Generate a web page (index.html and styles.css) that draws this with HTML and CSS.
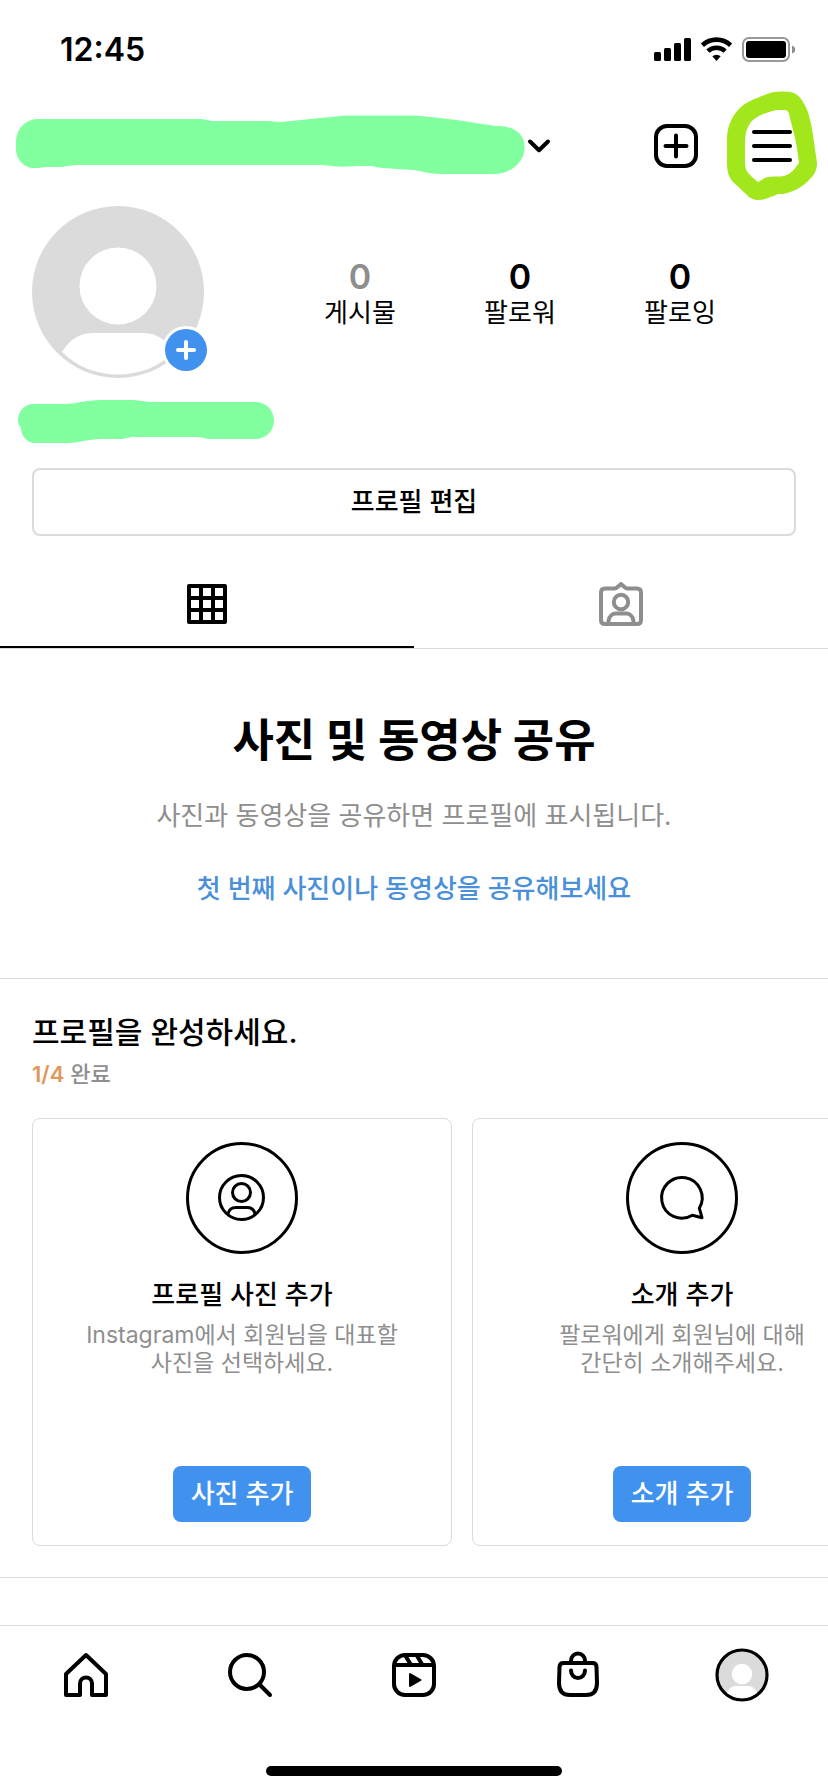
FILE: index.html
```html
<!DOCTYPE html>
<html lang="ko">
<head>
<meta charset="utf-8">
<meta name="viewport" content="width=device-width, initial-scale=1">
<title>프로필</title>
<link rel="stylesheet" href="styles.css">
</head>
<body>
<div class="status">
  <time class="clock">12:45</time>
  <svg class="status-icons" width="142" height="26" viewBox="0 0 142 26" aria-hidden="true">
    <rect x="0" y="15" width="7" height="9" rx="1.5"/>
    <rect x="10" y="11" width="7" height="13" rx="1.5"/>
    <rect x="20" y="6" width="7" height="18" rx="1.5"/>
    <rect x="30" y="1" width="7" height="23" rx="1.5"/>
    <g fill="none" stroke="#000" stroke-width="4.6">
      <path d="M48.4 8.2a20.6 20.6 0 0 1 28.2 0"/>
      <path d="M53.9 14.2a12.4 12.4 0 0 1 17.200 0"/>
    </g>
    <path d="M58.300 19.300a6.200 6.200 0 0 1 8.400 0L62.500 24z"/>
    <rect x="89" y="1" width="46" height="23" rx="6" fill="none" stroke="#999" stroke-width="2"/>
    <rect x="92" y="4" width="40" height="17" rx="3"/>
    <path d="M138 8.500q3.200 1 3.200 4t-3.200 4z" fill="#8e8e8e"/>
  </svg>
</div>

<header class="topbar">
  <button class="account" aria-label="계정 전환">
    <svg class="handle" width="510" height="61" viewBox="16 114 510 61" aria-hidden="true"><path class="brush" d="M16 143C16 129 25 119 39 119H198C206 119 208 121 216 121H266C272 121 276 122 281 122L320 118C333 117 340 115.500 352 115.500H414C438 117 470 122 496 126C510 126 519 130 523 139C530 158 513 174 494 174H441C430 174 421 171 414 170C400 169 393 169 383 168C375 167 374 166 366 166C356 166 347 167 337 166.500C330 166 325 165 317 165H78C70 165 67 167 57 167H46C40 168 37 168 32 168C23 167 16 158 16 150Z"/></svg>
    <svg class="chevron" width="24" height="16" viewBox="0 0 24 16" aria-hidden="true"><path d="M3 3.500L12 12.200L21 3.500" fill="none" stroke="#000" stroke-width="4" stroke-linecap="round" stroke-linejoin="round"/></svg>
  </button>
  <div class="actions">
    <button class="icon-btn" aria-label="만들기">
      <svg width="44" height="44" viewBox="0 0 44 44" fill="none" stroke="#000" stroke-width="4" stroke-linecap="round"><rect x="2" y="2" width="40" height="40" rx="11"/><path d="M22 11.500v21M11.500 22h21"/></svg>
    </button>
    <button class="icon-btn menu" aria-label="메뉴">
      <svg width="44" height="44" viewBox="0 0 44 44" fill="none" stroke="#000" stroke-width="4" stroke-linecap="round"><path d="M4 8h36M4 22h36M4 36h36"/></svg>
      <svg class="ring" width="92" height="110" viewBox="726 91 92 110" aria-hidden="true"><path fill="#a2e71c" fill-rule="evenodd" d="M767 94C773 91 784 91 790 92C797 93 801 98 803 102C809 111 811 123 813 135L817 163C817 171 814 175 810 179C804 186 794 192 783 194C778 194 777 194 774 196C769 197 765 200 759 200C753 200 750 198 746 194L733 182C728 176 727 170 727 163V139C727 128 731 118 738 110C746 101 757 98 767 94ZM777 110C771 111 766 113 761 115C755 118 752 120 749 125C745 132 745 139 745 146V163C745 170 748 173 752 177L758 182C764 179 765 177 769 177C775 176 779 177 784 176C792 174 795 168 799 163C798 155 797 147 795 138L790 118C789 113 788 110 785 110Z"/></svg>
    </button>
  </div>
</header>

<main>
  <section class="profile">
    <div class="profile-row">
      <div class="avatar">
        <svg width="172" height="172" viewBox="0 0 172 172" role="img" aria-label="프로필 사진"><circle cx="86" cy="86" r="86" fill="#dbdbdb"/><circle cx="86" cy="80" r="38.500" fill="#fff"/><path d="M30 146C36 136 46 127 60 127H112C126 127 136 136 142 146C127 161 107 168.500 86 168.500S45 161 30 146Z" fill="#fff"/></svg>
        <button class="badge" aria-label="스토리 추가"><svg width="48" height="48" viewBox="0 0 48 48"><circle cx="24" cy="24" r="21" fill="#4192ee"/><path d="M24 16v16M16 24h16" stroke="#fff" stroke-width="4" stroke-linecap="round"/></svg></button>
      </div>
      <div class="stats">
        <div class="stat"><strong class="muted">0</strong><span>게시물</span></div>
        <div class="stat"><strong>0</strong><span>팔로워</span></div>
        <div class="stat"><strong>0</strong><span>팔로잉</span></div>
      </div>
    </div>
    <svg class="name" width="256" height="43" viewBox="18 400 256 43" aria-hidden="true"><path class="brush" d="M18 420C18 411 25 404 33 404H64C76 404 84 400 102 400H130C140 400 144 402 154 402H255C266 402 274 410 274 420.500S266 439 255 439H211C205 439 203 437 196 437H134C128 437 126 439 120 439H101C88 439 79 443 67 443H35C27 443 21 436 21 428C19 425 18 424 18 420Z"/></svg>
    <button class="edit">프로필 편집</button>
  </section>

  <nav class="tabs" aria-label="게시물 보기">
    <button class="tab active" aria-label="게시물">
      <svg width="44" height="44" viewBox="0 0 44 44"><path fill-rule="evenodd" d="M4 2H40Q42 2 42 4V40Q42 42 40 42H4Q2 42 2 40V4Q2 2 4 2ZM6 6v8h8V6ZM18 6v8h8V6ZM30 6v8h8V6ZM6 18v8h8v-8ZM18 18v8h8v-8ZM30 18v8h8v-8ZM6 30v8h8v-8ZM18 30v8h8v-8ZM30 30v8h8v-8Z"/></svg>
    </button>
    <button class="tab" aria-label="태그됨">
      <svg width="44" height="44" viewBox="0 0 44 44" fill="none" stroke="#8e8e8e" stroke-width="4" stroke-linejoin="round"><path d="M6 6.500H15.500C18 6.500 19 4.500 22 2C25 4.500 26 6.500 28.500 6.500H38Q42 6.500 42 10.500V38Q42 42 38 42H6Q2 42 2 38V10.500Q2 6.500 6 6.500Z"/><circle cx="22" cy="20" r="7.200"/><path d="M9.500 42V39C10 34 13.500 31.500 17 31.500H27C30.500 31.500 34 34 34.500 39V42"/></svg>
    </button>
  </nav>

  <section class="empty">
    <h1>사진 및 동영상 공유</h1>
    <p>사진과 동영상을 공유하면 프로필에 표시됩니다.</p>
    <a href="#">첫 번째 사진이나 동영상을 공유해보세요</a>
  </section>

  <section class="complete">
    <h2>프로필을 완성하세요.</h2>
    <p class="progress"><b>1/4</b> 완료</p>
    <div class="cards">
      <article class="card">
        <svg width="112" height="112" viewBox="0 0 112 112" fill="none" stroke="#000" stroke-width="3" aria-hidden="true"><circle cx="56" cy="56" r="54.500"/><circle cx="55.500" cy="55.500" r="22"/><circle cx="55.500" cy="50.500" r="9"/><path d="M42 72C43 67 46 65.500 50 65.500H61C65 65.500 68 67 69 72"/></svg>
        <h3>프로필 사진 추가</h3>
        <p>Instagram에서 회원님을 대표할<br>사진을 선택하세요.</p>
        <button class="primary">사진 추가</button>
      </article>
      <article class="card">
        <svg width="112" height="112" viewBox="0 0 112 112" fill="none" stroke="#000" stroke-width="3" stroke-linejoin="round" aria-hidden="true"><circle cx="56" cy="56" r="54.500"/><path d="M73.300 66.200A20.300 20.300 0 1 0 66.300 73.200L76 75.700Z"/></svg>
        <h3>소개 추가</h3>
        <p>팔로워에게 회원님에 대해<br>간단히 소개해주세요.</p>
        <button class="primary">소개 추가</button>
      </article>
    </div>
  </section>
</main>

<footer class="bottom">
  <nav class="bottom-nav" aria-label="주요 메뉴">
    <a href="#" aria-label="홈"><svg width="54" height="54" viewBox="0 0 54 54" fill="none" stroke="#000" stroke-width="4" stroke-linejoin="round"><path d="M27 7L47 26V47H33V35.500A6 6 0 0 0 21 35.500V47H7V26Z"/></svg></a>
    <a href="#" aria-label="검색"><svg width="54" height="54" viewBox="0 0 54 54" fill="none" stroke="#000" stroke-width="4" stroke-linecap="round"><circle cx="24" cy="24" r="17"/><path d="M36.500 36.500L47 47"/></svg></a>
    <a href="#" aria-label="릴스"><svg width="54" height="54" viewBox="0 0 54 54" fill="none" stroke="#000" stroke-width="4"><rect x="7" y="7" width="40" height="40" rx="11"/><path d="M7 17H47M18 7L24 17M29.500 7L35.500 17"/><path fill="#000" stroke-width="2" stroke-linejoin="round" d="M23 26V38L33.500 32Z"/></svg></a>
    <a href="#" aria-label="쇼핑"><svg width="54" height="54" viewBox="0 0 54 54" fill="none" stroke="#000" stroke-width="4" stroke-linecap="round"><path d="M12.500 15H41.500Q45.300 15 45.500 19L46 35Q46 47 35 47H19Q8 47 8 35L8.500 19Q8.700 15 12.500 15Z"/><path d="M20 14V12.500A7 7 0 0 1 34 12.500V14M20 22.500A7 7.500 0 0 0 34 22.500"/></svg></a>
    <a href="#" aria-label="프로필"><svg width="54" height="54" viewBox="0 0 54 54"><circle cx="27" cy="27" r="25" fill="#dbdbdb" stroke="#000" stroke-width="3.200"/><circle cx="27" cy="26" r="10.300" fill="#fff"/><path d="M12 45C14 40 17 38 21 38H33C37 38 40 40 42 45Q35 50 27 50T12 45Z" fill="#fff"/></svg></a>
  </nav>
  <div class="home-bar"></div>
</footer>
</body>
</html>
```
FILE: styles.css
```css
* {
  box-sizing: border-box;
  margin: 0;
  padding: 0;
}

body {
  display: flex;
  flex-direction: column;
  min-height: 100vh;
  overflow-x: hidden;
  background: #fff;
  color: #000;
  font-family: Inter, "Noto Sans CJK KR", sans-serif;
  font-size: 26px;
  line-height: 32px;
}

button {
  border: 0;
  background: none;
  color: inherit;
  font: inherit;
}

svg {
  display: block;
  flex: none;
}

a {
  color: #4a90d9;
  text-decoration: none;
}

.brush {
  fill: #82ff9f;
}

.status {
  display: flex;
  align-items: center;
  justify-content: space-between;
  height: 100px;
  padding: 0 32px 0 60px;
}

.clock {
  font-size: 32px;
  font-weight: 600;
}

.topbar {
  display: flex;
  align-items: center;
  justify-content: space-between;
  height: 92px;
  padding: 0 34px 0 16px;
}

.account {
  display: flex;
  align-items: center;
  gap: 1px;
}

.handle {
  margin-bottom: 4px;
}

.actions {
  display: flex;
  gap: 52px;
}

.menu {
  position: relative;
}

.ring {
  position: absolute;
  top: -33px;
  left: -24px;
}

.profile {
  display: flex;
  flex-direction: column;
  padding: 14px 32px 0;
}

.profile-row {
  display: flex;
  align-items: center;
}

.avatar {
  position: relative;
}

.badge {
  position: absolute;
  right: -6px;
  bottom: 4px;
  border-radius: 50%;
  background: #fff;
}

.stats {
  display: grid;
  flex: 1;
  grid-template-columns: repeat(3, 1fr);
  padding: 6px 36px 0 76px;
}

.stat {
  display: flex;
  flex-direction: column;
  align-items: center;
  line-height: 36px;
}

.stat strong {
  font-size: 34px;
  font-weight: 600;
}

.stat .muted {
  color: #8e8e8e;
}

.name {
  margin: 22px 0 25px -14px;
}

.edit {
  height: 68px;
  border: 2px solid #dbdbdb;
  border-radius: 8px;
  font-weight: 500;
}

.tabs {
  display: grid;
  grid-template-columns: 1fr 1fr;
  margin-top: 24px;
  border-bottom: 1px solid #dbdbdb;
}

.tab {
  display: flex;
  justify-content: center;
  padding: 22px 0 20px;
  border-bottom: 2px solid transparent;
}

.tab.active {
  border-bottom-color: #000;
}

.empty {
  display: flex;
  flex-direction: column;
  align-items: center;
  padding: 66px 32px 73px;
  border-bottom: 1px solid #dbdbdb;
}

.empty h1 {
  font-size: 45px;
  font-weight: 700;
  line-height: 52px;
}

.empty p {
  margin: 33px 0 41px;
  color: #8e8e8e;
}

.empty a {
  font-weight: 500;
}

.complete {
  padding: 33px 0 31px 32px;
  border-bottom: 1px solid #dbdbdb;
  overflow: hidden;
}

.complete h2 {
  font-size: 30px;
  font-weight: 500;
  line-height: 40px;
}

.progress {
  margin: 8px 0 30px;
  color: #8e8e8e;
  font-size: 22px;
  font-weight: 500;
  line-height: 28px;
}

.progress b {
  color: #e3965a;
  font-weight: 600;
}

.cards {
  display: flex;
  gap: 20px;
}

.card {
  display: flex;
  flex: none;
  flex-direction: column;
  align-items: center;
  width: 420px;
  min-height: 428px;
  padding: 23px;
  border: 1px solid #dbdbdb;
  border-radius: 8px;
  text-align: center;
}

.card h3 {
  margin: 25px 0 10px;
  font-size: 26px;
  font-weight: 500;
}

.card p {
  color: #8e8e8e;
  font-size: 23px;
  line-height: 28px;
}

.primary {
  height: 56px;
  margin-top: auto;
  padding: 0 18px;
  border-radius: 8px;
  background: #4192ee;
  color: #fff;
  font-weight: 500;
}

.bottom {
  display: flex;
  flex-direction: column;
  align-items: center;
  margin-top: auto;
  padding-bottom: 16px;
  border-top: 1px solid #dbdbdb;
}

.bottom-nav {
  display: grid;
  grid-template-columns: repeat(5, 1fr);
  justify-items: center;
  width: 100%;
  padding: 22px 4px 64px;
}

.home-bar {
  width: 296px;
  height: 10px;
  border-radius: 5px;
  background: #000;
}
```
